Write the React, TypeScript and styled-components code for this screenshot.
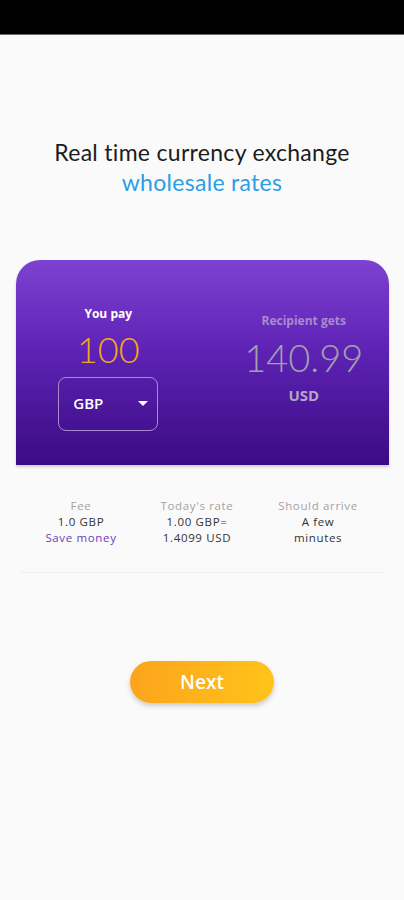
import { createGlobalStyle } from "styled-components";
import styled from "styled-components";

const GlobalStyle = createGlobalStyle`
  html, body {
    margin: 0;
    padding: 0;
    background: #fafafa;
  }
  body {
    font-family: "Open Sans", "Liberation Sans", sans-serif;
  }
`;

const Screen = styled.div`
  width: 404px;
  height: 900px;
  display: flex;
  flex-direction: column;
  background: #fafafa;
  overflow: hidden;
`;

const StatusBar = styled.div`
  height: 34px;
  background: #000;
  border-bottom: 1px solid #6a6a6a;
  flex-shrink: 0;
`;

const Heading = styled.div`
  margin-top: 102px;
  text-align: center;
  font-family: Lato, "Liberation Sans", sans-serif;
  font-size: 23px;
  line-height: 30px;
  color: #1c1c1c;
  letter-spacing: 0.3px;
`;

const Accent = styled.div`
  color: #2a9ee6;
`;

const Card = styled.div`
  margin: 63px 15px 0 16px;
  height: 205px;
  flex-shrink: 0;
  border-radius: 24px 24px 0 0;
  background: linear-gradient(180deg, #7e42d2 0%, #5d22b4 45%, #3b0b83 100%);
  box-shadow: 0 2px 3px rgba(0, 0, 0, 0.18);
  display: grid;
  grid-template-columns: 1fr 1fr;
  padding-top: 46px;
  box-sizing: border-box;
`;

const Side = styled.div<{ $shift?: number }>`
  display: flex;
  flex-direction: column;
  align-items: center;
  transform: translateX(${(p) => p.$shift ?? 0}px);
`;

const SideLabel = styled.div<{ $muted?: boolean }>`
  font-size: 12px;
  font-weight: 700;
  line-height: 16px;
  color: ${(p) => (p.$muted ? "#a98bcf" : "#ffffff")};
  margin-top: ${(p) => (p.$muted ? "7px" : "0")};
`;

const Amount = styled.div<{ $color: string; $size: number }>`
  font-family: Lato, "Liberation Sans", sans-serif;
  font-weight: 300;
  font-size: ${(p) => p.$size}px;
  line-height: ${(p) => p.$size + 4}px;
  color: ${(p) => p.$color};
  margin-top: 7px;
`;

const Select = styled.div`
  margin-top: 8px;
  width: 100px;
  height: 54px;
  box-sizing: border-box;
  border: 1.5px solid #a98bd2;
  border-radius: 8px;
  display: flex;
  align-items: center;
  justify-content: space-between;
  padding: 0 9px 2px 14px;
  color: #fff;
  font-size: 15px;
  font-weight: 600;
`;

const Caret = styled.span`
  width: 0;
  height: 0;
  border-left: 5px solid transparent;
  border-right: 5px solid transparent;
  border-top: 5px solid #fff;
`;

const Currency = styled.div`
  font-size: 15px;
  font-weight: 700;
  color: #b3a6c6;
  margin-top: 7px;
`;

const Details = styled.div`
  margin: 33px 20px 0 20px;
  display: grid;
  grid-template-columns: 122px 110px 1fr;
  padding-bottom: 26px;
  border-bottom: 1px solid #efefef;
`;

const Detail = styled.div`
  display: flex;
  flex-direction: column;
  align-items: center;
  text-align: center;
  font-size: 11.5px;
  letter-spacing: 0.65px;
  line-height: 16px;
  color: #333;
`;

const DetailLabel = styled.div`
  color: #a3a3a3;
`;

const Link = styled.div`
  color: #6a3dbd;
`;

const Footer = styled.div`
  display: flex;
  justify-content: center;
  margin-top: 88px;
`;

const NextButton = styled.button`
  width: 144px;
  height: 42px;
  border: none;
  border-radius: 21px;
  background: linear-gradient(90deg, #fca41c 0%, #ffc31a 100%);
  box-shadow: 0 3px 5px rgba(0, 0, 0, 0.18);
  color: #fff;
  font-family: "Open Sans", "Liberation Sans", sans-serif;
  font-size: 19px;
  font-weight: 600;
  cursor: pointer;
`;

export default function App() {
  return (
    <Screen>
      <GlobalStyle />
      <StatusBar />
      <Heading>
        Real time currency exchange
        <Accent>wholesale rates</Accent>
      </Heading>
      <Card>
        <Side $shift={-1}>
          <SideLabel>You pay</SideLabel>
          <Amount $color="#f5a623" $size={36}>100</Amount>
          <Select>
            GBP
            <Caret />
          </Select>
        </Side>
        <Side $shift={8}>
          <SideLabel $muted>Recipient gets</SideLabel>
          <Amount $color="#a3a0ae" $size={38}>140.99</Amount>
          <Currency>USD</Currency>
        </Side>
      </Card>
      <Details>
        <Detail>
          <DetailLabel>Fee</DetailLabel>
          <div>1.0 GBP</div>
          <Link>Save money</Link>
        </Detail>
        <Detail>
          <DetailLabel>Today's rate</DetailLabel>
          <div>1.00 GBP=</div>
          <div>1.4099 USD</div>
        </Detail>
        <Detail>
          <DetailLabel>Should arrive</DetailLabel>
          <div>A few</div>
          <div>minutes</div>
        </Detail>
      </Details>
      <Footer>
        <NextButton>Next</NextButton>
      </Footer>
    </Screen>
  );
}
